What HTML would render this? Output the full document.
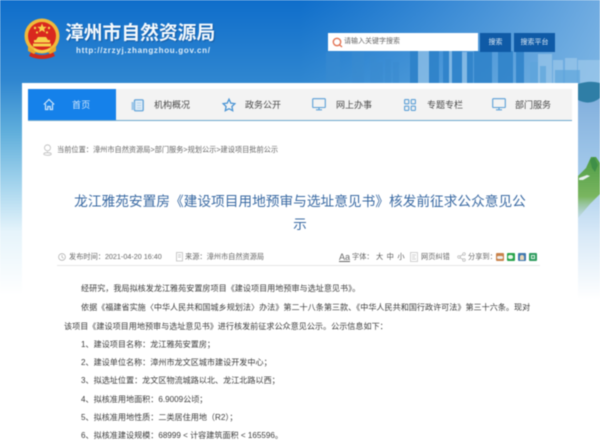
<!DOCTYPE html>
<html lang="zh-CN">
<head>
<meta charset="utf-8">
<title>漳州市自然资源局</title>
<style>
html,body{margin:0;padding:0;background:#fff}
#p{position:relative;width:600px;height:446px;overflow:hidden;font-family:"Liberation Sans","Noto Sans CJK SC",sans-serif;color:#555;filter:blur(.4px)}
#p>*{position:absolute}
.t{white-space:nowrap;line-height:14px;height:14px}
.n{font-size:9px;color:#484848;top:98px}
.b{font-size:8.1px;color:#3c3c3c;left:81px}
.m{font-size:7.2px;color:#666;top:250px}
.c{font-size:7.2px;color:#666}
</style>
</head>
<body>
<div id="p">
<svg style="left:0;top:0" width="600" height="446" viewBox="0 0 600 446">
<defs>
<linearGradient id="g1" x1="0" y1="0" x2="0" y2="1">
<stop offset="0" stop-color="#0f6ecb"/>
<stop offset=".18" stop-color="#2f86d0"/>
<stop offset=".3" stop-color="#62b0dc"/>
<stop offset=".42" stop-color="#a8d6ee"/>
<stop offset=".52" stop-color="#e6f4fb"/>
<stop offset=".66" stop-color="#ffffff"/>
</linearGradient>
<linearGradient id="g2" x1="0" y1="0" x2="0" y2="1">
<stop offset="0" stop-color="#7cabdb"/>
<stop offset=".45" stop-color="#a8cdec"/>
<stop offset=".7" stop-color="#d8e9f7"/>
<stop offset="1" stop-color="#ffffff"/>
</linearGradient>
<linearGradient id="g3" x1="0" y1="0" x2="1" y2="0">
<stop offset="0" stop-color="#8cc4ec" stop-opacity="0"/>
<stop offset="1" stop-color="#b0d4f0" stop-opacity=".6"/>
</linearGradient>
<linearGradient id="g4" x1="0" y1="0" x2="0" y2="1">
<stop offset="0" stop-color="#4f9c46"/>
<stop offset=".65" stop-color="#7ab660"/>
<stop offset="1" stop-color="#b8d4dc" stop-opacity=".5"/>
</linearGradient>
</defs>
<rect width="600" height="446" fill="url(#g1)"/>
<rect x="300" y="0" width="300" height="84" fill="url(#g3)"/>
<rect x="578" y="84" width="22" height="215" fill="url(#g2)"/>
<!-- skyline -->
<g fill="#3a8bd0" opacity=".55">
<rect x="326" y="52" width="14" height="32"/><rect x="352" y="52" width="12" height="32"/><rect x="370" y="56" width="6" height="28"/>
<rect x="375" y="62" width="8" height="22"/><rect x="385" y="59" width="6" height="25"/><rect x="393" y="62" width="6" height="22"/>
</g>
<g fill="#2b80c8" opacity=".8">
<rect x="410" y="51" width="8" height="33"/><rect x="429" y="51" width="10" height="33"/><rect x="443" y="51" width="6" height="33"/>
<rect x="452" y="51" width="10" height="33"/><rect x="467" y="52" width="6" height="32"/>
<rect x="474" y="51" width="18" height="33"/><rect x="498" y="51" width="15" height="33"/><rect x="516" y="51" width="8" height="33"/>
</g>
<g fill="#a4cdec" opacity=".6">
<rect x="418" y="51" width="11" height="33"/><rect x="449" y="51" width="3" height="33"/>
<rect x="462" y="52" width="5" height="32"/><rect x="538" y="54" width="14" height="30"/><rect x="553" y="60" width="10" height="24"/><rect x="565" y="58" width="12" height="26"/><rect x="578" y="60" width="22" height="24"/>
</g>
<g fill="#5da5dc" opacity=".7">
<rect x="530" y="62" width="8" height="22"/><rect x="555" y="70" width="25" height="14"/><rect x="540" y="66" width="6" height="18"/>
</g>
<path d="M578 84Q590 80 600 83V98Q590 106 578 100Z" fill="#2f7ea6"/>
<!-- mountain -->
<path d="M578 176L586 168 591 157 596 157 600 163V194L590 204 578 218Z" fill="url(#g4)"/>
<path d="M579 178L587 175 590 176 583 180 579 180Z" fill="#e6f0ee"/>
<path d="M590 160L594 157 598 165 595 172 592 168Z" fill="#3f8f48"/>
</svg>
<!-- emblem -->
<svg style="left:23px;top:18px" width="38" height="42" viewBox="0 0 38 42">
<circle cx="19" cy="18" r="17.5" fill="#f0b93a"/>
<circle cx="19" cy="18" r="14" fill="#d9281e"/>
<path d="M8 34Q19 40 30 34L32 38Q19 44 6 38Z" fill="#cf2a1c"/>
<path d="M5 28Q10 32 14 33L11 36 5 33ZM33 28Q28 32 24 33L27 36 33 33Z" fill="#e8a92d"/>
<g fill="#f7d24b">
<path d="M19 5.500l1.300 3.200 3.400.2-2.600 2.100.9 3.300-3-1.900-3 1.900.9-3.300-2.600-2.100 3.400-.2z"/>
<circle cx="12" cy="10" r="1.200"/><circle cx="26" cy="10" r="1.200"/><circle cx="14" cy="14.500" r="1.100"/><circle cx="24" cy="14.500" r="1.100"/>
<path d="M15 19h8l2 3H13z"/>
<rect x="11" y="22" width="16" height="2.500"/>
<rect x="10" y="25.500" width="18" height="3"/>
<path d="M11 30q8 5 16 0v2.500q-8 4-16 0z"/>
</g>
</svg>
<div class="t" style="left:65px;top:20px;height:26px;line-height:26px;font-size:18.800px;font-weight:bold;color:#f4f9fd;text-shadow:1px 1px 1px rgba(10,60,120,.5)">漳州市自然资源局</div>
<div class="t" style="left:76px;top:44px;font-size:8px;font-weight:bold;letter-spacing:.7px;color:#dcecf8">http://zrzyj.zhangzhou.gov.cn/</div>
<!-- search -->
<div style="left:328px;top:33px;width:150px;height:18px;background:#fff"></div>
<svg style="left:332px;top:37px" width="11" height="11" viewBox="0 0 11 11"><circle cx="5" cy="5" r="3.700" fill="none" stroke="#e2704f" stroke-width="1.300"/><path d="M7.500 7.800L10 10" stroke="#e2704f" stroke-width="1.300"/></svg>
<div class="t" style="left:344px;top:35px;font-size:7px;color:#666">请输入关键字搜索</div>
<div class="t" style="left:480px;top:33px;width:31px;height:19px;line-height:19px;background:#0f5aa6;color:#d8e8f6;font-size:7px;text-align:center">搜索</div>
<div class="t" style="left:514px;top:33px;width:41px;height:19px;line-height:19px;background:#0f5aa6;color:#d8e8f6;font-size:7px;text-align:center">搜索平台</div>
<!-- panel -->
<div style="left:22px;top:83px;width:556px;height:363px;background:#fff"></div>
<div style="left:28px;top:89px;width:544px;height:31px;background:#f3f3f3;border-bottom:1px solid #6ea8cd"></div>
<div style="left:28px;top:89px;width:88px;height:31px;background:#1581ea"></div>
<svg style="left:43px;top:98px" width="12" height="14" viewBox="0 0 12 14" fill="none" stroke="#cfe6fb" stroke-width="1.200"><path d="M.8 6.500L6 1.500l5.200 5M2.500 6v5.500h2.300V8.500h2.400v3h2.300V6"/></svg>
<div class="t n" style="left:72px;color:#cfe6fb;letter-spacing:.3px">首页</div>
<svg style="left:131px;top:99px" width="13" height="13" viewBox="0 0 13 13"><rect x="3.500" y=".8" width="8.700" height="11" rx="1" fill="#dcebf7" stroke="#5b9fd6" stroke-width="1.200"/><rect x=".5" y="3" width="3" height="8" fill="#9cc6e8"/><path d="M6 4h4M6 6.500h4M6 9h4" stroke="#a8cdea" stroke-width=".8"/></svg>
<div class="t n" style="left:154px">机构概况</div>
<svg style="left:222px;top:98px" width="14" height="14" viewBox="0 0 14 14"><path d="M7 1.200l1.800 3.900 4.200.5-3.100 2.900.8 4.200L7 10.700l-3.700 2 .8-4.200L1 5.600l4.200-.5z" fill="none" stroke="#4a94d4" stroke-width="1.300"/></svg>
<div class="t n" style="left:245px">政务公开</div>
<svg style="left:312px;top:98px" width="14" height="13" viewBox="0 0 14 13" fill="none" stroke="#5b9fd6" stroke-width="1.100"><rect x=".7" y=".7" width="12.600" height="8.800" rx=".8"/><path d="M7 9.500v2M4 11.800h6"/></svg>
<div class="t n" style="left:336px">网上办事</div>
<svg style="left:404px;top:99px" width="12" height="12" viewBox="0 0 12 12" fill="none" stroke="#5b9fd6" stroke-width="1.100"><rect x=".6" y=".6" width="4.200" height="4.200" rx=".6"/><rect x="7.200" y=".6" width="4.200" height="4.200" rx=".6"/><rect x=".6" y="7.200" width="4.200" height="4.200" rx=".6"/><rect x="7.200" y="7.200" width="4.200" height="4.200" rx=".6"/></svg>
<div class="t n" style="left:427px">专题专栏</div>
<svg style="left:492px;top:98px" width="14" height="13" viewBox="0 0 14 13" fill="none" stroke="#5b9fd6" stroke-width="1.100"><rect x=".7" y=".7" width="12.600" height="8.800" rx=".8"/><path d="M7 9.500v2M4 11.800h6"/></svg>
<div class="t n" style="left:515px">部门服务</div>
<!-- breadcrumb -->
<svg style="left:43px;top:144px" width="9" height="12" viewBox="0 0 9 12" fill="none" stroke="#bdbdbd" stroke-width=".8"><circle cx="4.500" cy="3.800" r="3"/><path d="M4.500 7.500v1.500"/><ellipse cx="4.500" cy="10" rx="3.800" ry="1.300"/></svg>
<div class="t c" style="left:57px;top:143px">当前位置：漳州市自然资源局&gt;部门服务&gt;规划公示&gt;建设项目批前公示</div>
<!-- title -->
<div class="t" style="left:30px;top:190px;width:540px;height:23px;line-height:23px;font-size:13.700px;color:#3a6aa3;text-align:center">龙江雅苑安置房《建设项目用地预审与选址意见书》核发前征求公众意见公</div>
<div class="t" style="left:30px;top:213px;width:540px;height:23px;line-height:23px;font-size:13.700px;color:#3a6aa3;text-align:center">示</div>
<!-- meta -->
<svg style="left:58px;top:253px" width="8" height="8" viewBox="0 0 8 8" fill="none" stroke="#aaa" stroke-width=".7"><circle cx="4" cy="4" r="3.400"/><path d="M4 2v2.200l1.500 1"/></svg>
<div class="t m" style="left:69px">发布时间：2021-04-20 16:40</div>
<svg style="left:176px;top:252px" width="7" height="10" viewBox="0 0 7 10" fill="none" stroke="#b5b5b5" stroke-width=".7"><rect x=".5" y=".5" width="6" height="8.500"/><path d="M2 3h3M2 5h3"/></svg>
<div class="t m" style="left:185px">来源：漳州市自然资源局</div>
<div class="t m" style="left:339px;font-size:9px;text-decoration:underline;color:#666">Aa</div>
<div class="t m" style="left:352px">字体：</div>
<div class="t m" style="left:376px;color:#555;word-spacing:1.500px">大 中 小</div>
<svg style="left:410px;top:252px" width="8" height="10" viewBox="0 0 8 10" fill="none" stroke="#c0c0c0" stroke-width=".7"><rect x=".5" y=".5" width="7" height="9"/><path d="M2 3h4M2 5h3M2 7h4"/></svg>
<div class="t m" style="left:421px">网页纠错</div>
<svg style="left:457px;top:252px" width="9" height="10" viewBox="0 0 9 10" fill="none" stroke="#b0b0b0" stroke-width=".7"><circle cx="2" cy="5" r="1.300"/><circle cx="7" cy="2" r="1.300"/><circle cx="7" cy="8" r="1.300"/><path d="M3.100 4.300l2.800-1.700M3.100 5.700l2.800 1.700"/></svg>
<div class="t m" style="left:468px">分享到：</div>
<div style="left:496px;top:253px;width:8px;height:8px;background:#c9824a;border-radius:1px"><div style="width:6px;height:3px;margin:3px 1px;background:#eee;border-radius:2px"></div></div>
<div style="left:507px;top:253px;width:8px;height:8px;background:#27a34a;border-radius:1px"><div style="width:5px;height:4px;margin:2px 1px;background:#e8f8ea;border-radius:2px"></div></div>
<div style="left:518px;top:253px;width:8px;height:8px;background:#3f78b0;border-radius:1px"><div style="width:4px;height:5px;margin:2px;background:#e8d6b8;border-radius:2px 2px 0 0"></div></div>
<div style="left:529px;top:253px;width:8px;height:8px;background:#2f9c5f;border-radius:1px"><div style="width:4px;height:4px;margin:2px;border:.5px solid #d8f0e0;box-sizing:border-box"></div></div>
<div style="left:57px;top:265px;width:483px;height:1px;background:#e6e6e6"></div>
<!-- body -->
<div class="t b" style="top:282px">经研究，我局拟核发龙江雅苑安置房项目《建设项目用地预审与选址意见书》。</div>
<div class="t b" style="top:301px">依据《福建省实施〈中华人民共和国城乡规划法〉办法》第二十八条第三款、《中华人民共和国行政许可法》第三十六条。现对</div>
<div class="t b" style="top:320px;left:64px">该项目《建设项目用地预审与选址意见书》进行核发前征求公众意见公示。公示信息如下：</div>
<div class="t b" style="top:338px">1、建设项目名称：龙江雅苑安置房；</div>
<div class="t b" style="top:356px">2、建设单位名称：漳州市龙文区城市建设开发中心；</div>
<div class="t b" style="top:374px">3、拟选址位置：龙文区物流城路以北、龙江北路以西；</div>
<div class="t b" style="top:393px">4、拟核准用地面积：6.9009公顷；</div>
<div class="t b" style="top:411px">5、拟核准用地性质：二类居住用地（R2）；</div>
<div class="t b" style="top:429px">6、拟核准建设规模：68999 &lt; 计容建筑面积 &lt; 165596。</div>
</div>
</body>
</html>
